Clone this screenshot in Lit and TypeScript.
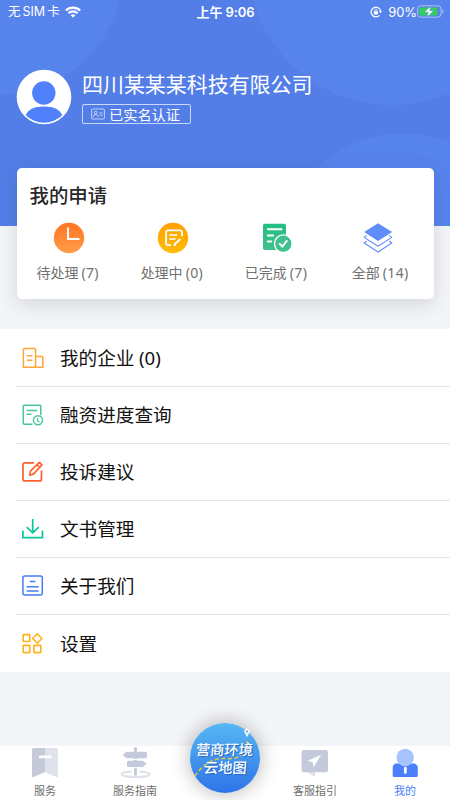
import { LitElement, html, css, svg } from "lit";
import { customElement } from "lit/decorators.js";

const icon = (w: number, h: number, body: unknown, box = `0 0 ${w} ${h}`) =>
  html`<svg width=${w} height=${h} viewBox=${box} fill="none">${body}</svg>`;

const wifi = icon(16, 12, svg`
  <g stroke="#fff" stroke-width="2.3"><path d="M.9 4.5a10 10 0 0 1 14.2 0"/><path d="M3.5 7.3a6.4 6.4 0 0 1 9 0"/></g>
  <path d="M5.7 9.3a3.3 3.3 0 0 1 4.6 0L8 11.7z" fill="#fff"/>`);

const rotationLock = icon(12, 12, svg`
  <path d="M9.6 9.4A4.9 4.9 0 1 1 10.8 5" stroke="#fff" stroke-width="1.2"/>
  <path d="M8.9 5h3.1l-1.5 2.3z" fill="#fff"/>
  <rect x="3.8" y="5.3" width="4.2" height="3.2" rx=".5" fill="#fff"/>
  <path d="M4.6 5.5V4.6a1.3 1.3 0 0 1 2.6 0v.9" stroke="#fff" stroke-width=".8"/>`);

const battery = icon(28, 14, svg`
  <rect x=".6" y=".8" width="23.4" height="11.4" rx="3.2" stroke="#fff" stroke-opacity=".5"/>
  <path d="M25.3 4.4c1.8.5 1.8 3.7 0 4.2z" fill="#fff" fill-opacity=".5"/>
  <rect x="2.3" y="2.5" width="18" height="8" rx="1.6" fill="#30d158"/>
  <path d="M13.8 1.2 7.3 7.2h4L10 12l6.7-6.2h-4z" fill="#fff" stroke="#5681ea" stroke-width=".5"/>`);

const avatar = icon(56, 56, svg`
  <circle cx="28" cy="28" r="27.3" fill="#fff"/>
  <circle cx="27.8" cy="24" r="11.7" fill="#5080fb"/>
  <path d="M9.8 46.3C12 40.5 18 37.5 28 37.5s16 3 18.2 8.8a25.9 25.9 0 0 1-36.4 0z" fill="#5080fb"/>`);

const idCard = icon(14, 12, svg`
  <g stroke="#fff" stroke-opacity=".8" stroke-width=".8"><rect x=".6" y="1" width="12.8" height="10" rx=".8"/>
  <circle cx="4.7" cy="4.7" r="1.4"/><path d="M2.4 9.2c0-3.6 4.6-3.6 4.6 0M8.3 5h3.4M8.3 7.2h3.4"/></g>`);

const clock = icon(32, 32, svg`
  <defs><linearGradient id="o" x1="0" y1="0" x2="0" y2="1"><stop stop-color="#ff7522"/><stop offset="1" stop-color="#ff9d48"/></linearGradient></defs>
  <circle cx="16" cy="16" r="15.2" fill="url(#o)"/><path d="M15 5.5V17h11.5" stroke="#fff" stroke-width="2"/>`);

const processing = icon(32, 32, svg`
  <defs><linearGradient id="y" x1="0" y1="0" x2="0" y2="1"><stop stop-color="#ffa000"/><stop offset="1" stop-color="#ffbc06"/></linearGradient></defs>
  <circle cx="16" cy="16" r="15.2" fill="url(#y)"/>
  <g stroke="#fff" stroke-width="1.8"><path d="M14 23.2h-3.1a1.8 1.8 0 0 1-1.8-1.8V10.2a1.8 1.8 0 0 1 1.8-1.8h12.300a1.800 1.800 0 0 1 1.800 1.800v4"/>
  <path d="M12.300 13h8M12.300 17h6.200" stroke-width="1.500"/><path d="m17.500 24 .7-2.200 5.200-4.700" stroke-width="2"/></g>`);

const done = icon(32, 32, svg`
  <defs><linearGradient id="g" x1="0" y1="0" x2="0" y2="1"><stop stop-color="#22be83"/><stop offset="1" stop-color="#3fc18d"/></linearGradient></defs>
  <rect x="2" y="1.800" width="23" height="26.200" rx="1.800" fill="url(#g)"/>
  <path d="M6.800 7.300h13.800M6.800 13.500h5.400M6.800 19.500h3.600" stroke="#fff" stroke-width="1.900" stroke-linecap="round"/>
  <circle cx="22.300" cy="21.700" r="9.500" fill="#fff"/><circle cx="22.300" cy="21.700" r="8.100" fill="#3fc18d"/>
  <path d="m18.700 21.800 2.700 2.700 4.400-5.600" stroke="#fff" stroke-width="1.900" stroke-linecap="round"/>`);

const layers = icon(32, 32, svg`
  <path d="M13 2 27.200 10.800 13 19.600-.9 10.800z" transform="translate(0 -.7)" fill="#5f8efb"/>
  <g stroke="#5f8efb" stroke-width="1.100" stroke-linejoin="round" transform="translate(-3 0)"><path d="m4.800 13.400-2.600 2L16 24.200l13.800-8.800-2.600-2"/>
  <path d="m4.800 19-2.600 2L16 30l13.800-9-2.600-2"/></g>`, "-3 0 32 32");

const company = icon(24, 24, svg`
  <g stroke="#fda637" stroke-width="1.500" stroke-linejoin="round"><path d="M14.600 21.300H2.400V3.400A1 1 0 0 1 3.400 2.400h10.200a1 1 0 0 1 1 1v17.900"/>
  <path d="M14.600 10.500h6.200a1 1 0 0 1 1 1v9.800h-7.200M6 9.800h5.500M6 14.300h5.500"/></g>`);

const progress = icon(24, 24, svg`
  <g stroke="#48c795" stroke-width="1.500"><path d="M11.500 21.300H3.300a1 1 0 0 1-1-1V3.200a1 1 0 0 1 1-1h15.500a1 1 0 0 1 1 1v9"/>
  <path d="M5.700 7.400h10.500M5.700 11.300h4.800"/><circle cx="17" cy="17.300" r="4.500"/><path d="M16.600 14.700v3l1.900 1.500" stroke-width="1.200"/></g>`);

const complain = icon(24, 24, svg`
  <g stroke="#ff6130" stroke-width="1.700" stroke-linejoin="round"><path d="M13 2.900H4a2 2 0 0 0-2 2v14a2 2 0 0 0 2 2h14.500a2 2 0 0 0 2-2v-8.500"/>
  <path d="m8.700 15.200.8-4L18.300 2.300l2.700 2.500-8.600 9.300zM16 4.800l2.700 2.500" stroke-width="1.700"/></g>`);

const download = icon(24, 24, svg`
  <path d="M11.700 2v13.300M5.700 10.200l6 5.600 6-5.600M1.900 13.500v7.100h19.600v-7.100" stroke="#0dc599" stroke-width="1.700"/>`);

const about = icon(24, 24, svg`
  <g stroke="#487bfa" stroke-width="1.500"><rect x="1.900" y="1.900" width="19.400" height="19.200" rx="2"/><path d="M8.800 7.500h5.600M5.600 12.800h12M5.600 16.900h12"/></g>`);

const settings = icon(24, 24, svg`
  <g stroke="#ffb11b" stroke-width="1.600"><rect x="2.200" y="2.600" width="6.600" height="6.900" rx=".5"/><rect x="2.200" y="13.400" width="6.600" height="7.200" rx=".5"/>
  <rect x="12.900" y="13.400" width="6.900" height="7.200" rx=".5"/><path d="m16.300 1.800 4.600 4.700-4.600 4.700-4.700-4.700z" stroke-linejoin="round"/></g>`);

const tabService = icon(32, 32, svg`
  <path d="M3 3.500A1.500 1.500 0 0 1 4.500 2H16v24.300L4.400 31.100A1 1 0 0 1 3 30.200z" fill="#c4cad9"/>
  <path d="M16 2h11.500A1.500 1.500 0 0 1 29 3.500v26.700a1 1 0 0 1-1.400.9L16 26.300z" fill="#dfe2ea"/>
  <rect x="10" y="9.400" width="12.500" height="2.900" rx=".7" fill="#fff"/>`);

const tabGuide = icon(32, 32, svg`
  <ellipse cx="16.500" cy="28.300" rx="14" ry="2.900" stroke="#dfe2ea" stroke-width="2"/>
  <rect x="12.500" y="24" width="8" height="4.500" fill="#fff"/>
  <circle cx="16.500" cy="2.700" r="1.700" fill="#c4cad9"/><path d="M16.500 3v25.500" stroke="#c4cad9" stroke-width="2.800" stroke-linecap="round"/>
  <path d="M7.500 5.800h19a1.500 1.500 0 0 1 1.500 1.500v3.400a1.500 1.500 0 0 1-1.500 1.500h-19L3.500 9z" fill="#c4cad9"/>
  <path d="M9.500 14.800h14.500l3.700 3-3.700 3.200H9.500A1.500 1.500 0 0 1 8 19.500v-3.200a1.500 1.500 0 0 1 1.500-1.500z" fill="#c4cad9"/>
  <path d="M15 13.500h3M15 21.700h3" stroke="#fff"/>`);

const tabSupport = icon(32, 32, svg`
  <path d="M7 25.500h9v5.600z" fill="#dfe2ea"/><rect x="2.500" y="4" width="26.500" height="22.200" rx="2.500" fill="#c4cad9"/>
  <path d="M22.200 8.800 8.700 14.800l5.200 1.800.7 4.600z" fill="#fff"/>`);

const tabMine = icon(32, 32, svg`
  <path d="M6.500 17.500h19c2 1 3.300 2.300 3.300 4v8.100a1.500 1.500 0 0 1-1.500 1.500H5.200a1.500 1.500 0 0 1-1.500-1.500v-8.100c0-1.700 1-3 2.800-4z" fill="#4b7ffc"/>
  <circle cx="16.200" cy="11.500" r="8.700" fill="#a5c4fd"/><rect x="15" y="20.700" width="2.700" height="7" rx="1.200" fill="#fff"/>`);

const route = icon(70, 70, svg`
  <path d="M5 53C11 43 24 34 36 35.500S57 31 57.400 18" stroke="#e7c63c" stroke-width="1.500" stroke-dasharray="4 2.500"/>
  <path d="M57 14.300 54.600 9.800a2.800 2.800 0 1 1 4.800 0z" fill="#fff" opacity=".85"/><circle cx="57" cy="8.500" r="1" fill="#4699ed"/>`);

@customElement("app-root")
export class AppRoot extends LitElement {
  static styles = css`
    :host { display: block; font-family: "Noto Sans CJK SC", sans-serif; }
    * { box-sizing: border-box; }
    svg { display: block; flex: none; }
    .screen { width: 450px; height: 800px; position: relative; overflow: hidden; background: #f4f5f8; display: flex; flex-direction: column; white-space: nowrap; }
    .hero { height: 226px; flex: none; position: relative; overflow: hidden; color: #fff;
      background: radial-gradient(circle at 0 -28px, #5783ed 122px, transparent 123px),
        radial-gradient(circle at 392px -39.5px, #5783ed 144px, transparent 145px),
        radial-gradient(circle at 403px 259px, #5783ed 125px, transparent 126px), #537ee8; }
    .status { height: 23px; display: grid; grid-template-columns: 1fr auto 1fr; align-items: center; padding: 0 4px 0 8px; font: 14px/20px Inter, "Noto Sans CJK SC", sans-serif; }
    .carrier { display: flex; align-items: center; gap: 5px; font-size: 12.5px; }
    .carrier span { word-spacing: -1.2px; letter-spacing: -.1px; }
    .time { font-weight: 600; font-size: 13px; letter-spacing: -.1px; margin-left: -3px; }
    .power { display: flex; justify-content: flex-end; align-items: center; font-size: 13px; letter-spacing: -.1px; }
    .power svg:first-child { margin-right: 6px; }
    .power svg:last-child { margin: 0 1px 0 0; }
    .profile { display: flex; padding: 46px 0 0 16px; gap: 10px; }
    .identity { display: flex; flex-direction: column; }
    .name { font-size: 21px; line-height: 30px; letter-spacing: -.05px; margin-top: -1px; }
    .badge { margin-top: 6px; width: 109px; height: 20px; border: 1px solid #ffffffb0; border-radius: 2px; display: flex; align-items: center; gap: 4px; padding-left: 8px; font-size: 14.2px; line-height: 18px; }
    .badge span { position: relative; top: -.5px; }
    .card { position: relative; width: 417px; height: 131px; flex: none; margin: -58px 0 0 16.5px; background: #fff; border-radius: 5px; padding: 12px 0 0; box-shadow: 0 5px 20px #3340552e; }
    .card-title { font-size: 19.4px; font-weight: 500; line-height: 29px; color: #282828; padding-left: 13px; }
    .steps { display: grid; grid-template-columns: repeat(4, 104.2px); margin: 13px 0 0 -1px; }
    .step { display: flex; flex-direction: column; align-items: center; gap: 8px; font-size: 14px; line-height: 20px; color: #717171; }
    .step svg { margin-left: 2px; }
    .step:last-child svg { margin-left: -4px; }
    .count { margin-left: 3px; letter-spacing: .3px; font-family: "Noto Sans", sans-serif; }
    .menu { margin-top: 30px; padding-top: 1px; background: #fff; height: 343px; flex: none; }
    .row { height: 57px; margin-left: 16px; display: flex; align-items: center; gap: 15px; padding-left: 5px; font-size: 18.6px; line-height: 28px; color: #111; border-bottom: 1px solid #e5e5e5; }
    .row > div { margin-top: -2px; }
    .row:last-child { border: 0; }
    .row .count { margin-left: 4.5px; letter-spacing: 0; }
    .tabs { margin-top: auto; height: 54px; background: #fff; display: grid; grid-template-columns: repeat(5, 90px); color: #6d6d6d; }
    .tab { display: flex; flex-direction: column; align-items: center; gap: 5px; font-size: 11px; line-height: 15px; }
    .tab.on { color: #4b7ffc; }
    .map { position: absolute; left: 190px; top: 723px; width: 70px; height: 70px; border-radius: 50%; background: linear-gradient(#58b7f4, #2d74e7); box-shadow: 0 0 20px #0000004d; color: #fff; display: flex; flex-direction: column; justify-content: center; align-items: center; font-size: 14.3px; line-height: 18px; font-weight: 500; text-shadow: 1px 1px 1px #2062bd; }
    .map svg { position: absolute; left: 0; top: 0; }
    .map span { position: relative; transform: skewX(-5deg); }
  `;

  private step(art: unknown, label: string, count: number) {
    return html`<div class="step">${art}<div>${label}<span class="count">(${count})</span></div></div>`;
  }
  private row(art: unknown, label: string, count?: number) {
    return html`<div class="row">${art}<div>${label}${count === undefined ? "" : html`<span class="count">(${count})</span>`}</div></div>`;
  }
  private tab(art: unknown, label: string, on = false) {
    return html`<div class="tab ${on ? "on" : ""}">${art}<span>${label}</span></div>`;
  }

  render() {
    return html`<div class="screen">
      <div class="hero">
        <div class="status">
          <div class="carrier"><span>无 SIM 卡</span>${wifi}</div>
          <div class="time">上午 9:06</div>
          <div class="power">${rotationLock}<span>90%</span>${battery}</div>
        </div>
        <div class="profile">${avatar}
          <div class="identity">
            <div class="name">四川某某某科技有限公司</div>
            <div class="badge">${idCard}<span>已实名认证</span></div>
          </div>
        </div>
      </div>
      <div class="card">
        <div class="card-title">我的申请</div>
        <div class="steps">
          ${this.step(clock, "待处理", 7)}${this.step(processing, "处理中", 0)}
          ${this.step(done, "已完成", 7)}${this.step(layers, "全部", 14)}
        </div>
      </div>
      <div class="menu">
        ${this.row(company, "我的企业", 0)}${this.row(progress, "融资进度查询")}
        ${this.row(complain, "投诉建议")}${this.row(download, "文书管理")}
        ${this.row(about, "关于我们")}${this.row(settings, "设置")}
      </div>
      <div class="tabs">
        ${this.tab(tabService, "服务")}${this.tab(tabGuide, "服务指南")}<div></div>
        ${this.tab(tabSupport, "客服指引")}${this.tab(tabMine, "我的", true)}
      </div>
      <div class="map">${route}<span>营商环境</span><span>云地图</span></div>
    </div>`;
  }
}
